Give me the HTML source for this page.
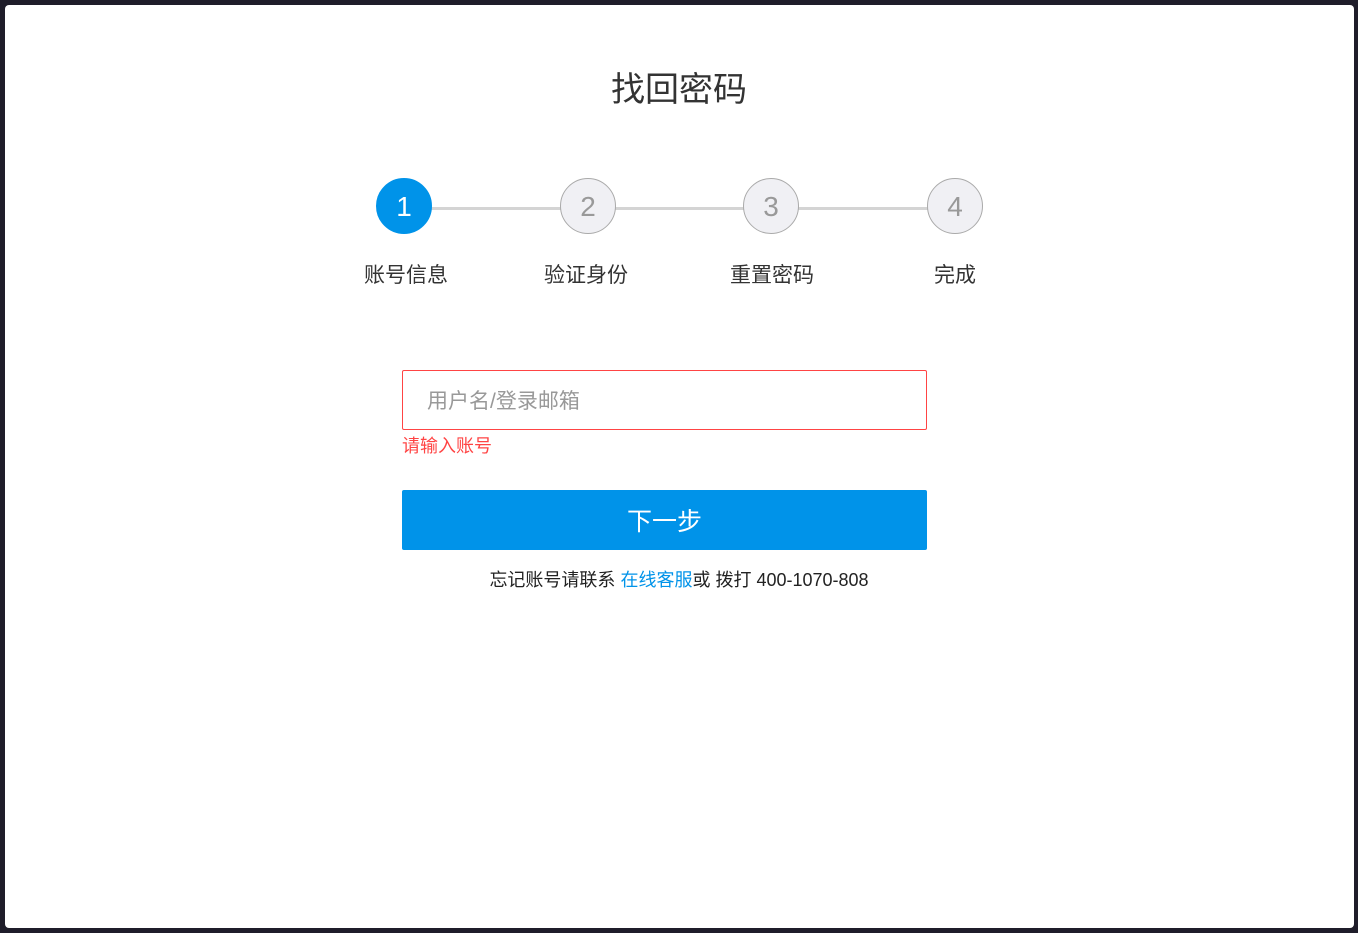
<!DOCTYPE html>
<html><head><meta charset="utf-8"><style>
body{margin:0;background:#1f1d2a;width:1358px;height:933px;overflow:hidden;font-family:"Liberation Sans","Noto Sans CJK SC",sans-serif}
.card{position:absolute;left:5px;top:5px;width:1349px;height:923px;background:#fff;border-radius:4px}
.abs{position:absolute}
.title{left:0;width:1358px;text-align:center;top:62px;font-size:34px;color:#333}
.line{height:3px;background:#d4d4d4;top:207px}
.c{width:54px;height:54px;border-radius:50%;border:1px solid #aaa;background:#f0f0f4;color:#999;font-size:28px;text-align:center;line-height:56px;top:178px}
.c.a{background:#0093e9;border-color:#0093e9;color:#fff}
.lb{top:259px;font-size:21px;color:#333;width:140px;text-align:center}
</style></head><body>
<div class="card"></div>
<div class="abs title">找回密码</div>
<div class="abs line" style="left:430px;width:500px"></div>
<div class="abs c a" style="left:376px">1</div>
<div class="abs c" style="left:560px">2</div>
<div class="abs c" style="left:743px">3</div>
<div class="abs c" style="left:927px">4</div>
<div class="abs lb" style="left:336px">账号信息</div>
<div class="abs lb" style="left:516px">验证身份</div>
<div class="abs lb" style="left:702px">重置密码</div>
<div class="abs lb" style="left:885px">完成</div>
<div class="abs" style="left:402px;top:370px;width:523px;height:58px;border:1px solid #f44;border-radius:2px"></div>
<div class="abs" style="left:427px;top:385px;font-size:21px;color:#999">用户名/登录邮箱</div>
<div class="abs" style="left:402px;top:432px;font-size:18px;color:#f44">请输入账号</div>
<div class="abs" style="left:402px;top:490px;width:525px;height:60px;background:#0093e9;border-radius:2px;color:#fff;font-size:25px;text-align:center;line-height:64px">下一步</div>
<div class="abs" style="left:0;width:1358px;text-align:center;top:566px;font-size:18px;color:#222">忘记账号请联系 <span style="color:#0093e9">在线客服</span>或 拨打 400-1070-808</div>
</body></html>
